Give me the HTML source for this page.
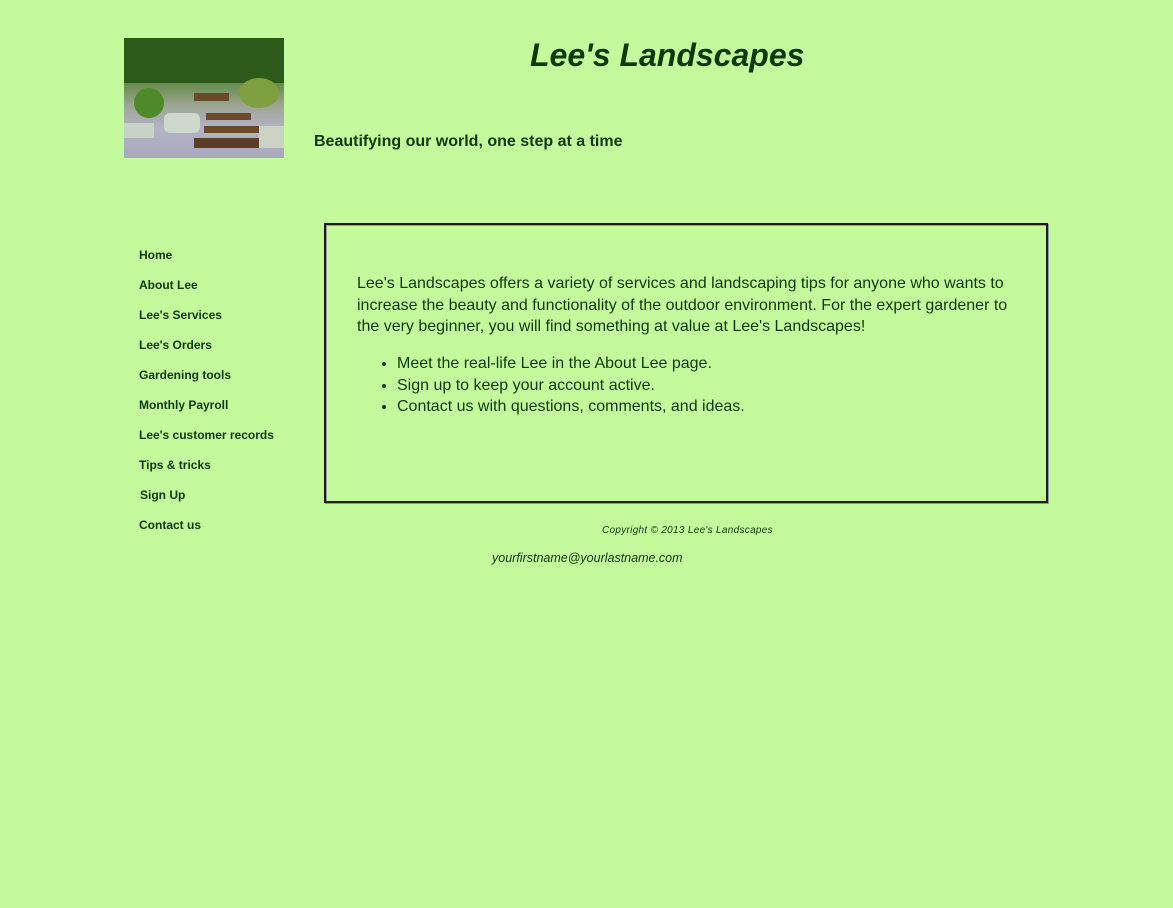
<!DOCTYPE html>
<html><head><style>
body{margin:0;background:#c3fb9c;font-family:"Liberation Sans",Arial,sans-serif;color:#0d3a0d;width:1173px;height:908px;position:relative;overflow:hidden}
.a{position:absolute}
.img{left:124px;top:38px;width:160px;height:120px;background:linear-gradient(180deg,#2f5a1c 0%,#4d7f2a 30%,#9aa48e 55%,#b4b3c6 75%,#a9a9bd 100%);overflow:hidden}
.nav div{position:absolute;left:139px;font-size:12px;font-weight:bold;color:#0d3a0d}
.box{left:324px;top:223px;width:720px;height:276px;border:2px solid #1c1c1c;box-shadow:1px 1px 0 #999, inset 1px 1px 0 #999}
</style></head><body>
<div class="a img">
<div class="a" style="left:0;top:0;width:160px;height:45px;background:#2c5a1a"></div>
<div class="a" style="left:115px;top:40px;width:40px;height:30px;background:#7fa040;border-radius:50%"></div>
<div class="a" style="left:10px;top:50px;width:30px;height:30px;background:#4f8a2a;border-radius:50%"></div>
<div class="a" style="left:70px;top:55px;width:35px;height:8px;background:#6b4a2a"></div>
<div class="a" style="left:82px;top:75px;width:45px;height:7px;background:#6b4a2a"></div>
<div class="a" style="left:80px;top:88px;width:58px;height:7px;background:#6b4a2a"></div>
<div class="a" style="left:70px;top:100px;width:70px;height:10px;background:#5e3e22"></div>
<div class="a" style="left:40px;top:75px;width:36px;height:20px;background:#cfd8cc;border-radius:6px"></div>
<div class="a" style="left:0;top:85px;width:30px;height:15px;background:#c8d2c6"></div>
<div class="a" style="left:135px;top:88px;width:25px;height:22px;background:#cbd2c6"></div>
</div>
<div class="a" style="left:530px;top:37px;font-size:32px;font-weight:bold;font-style:italic;color:#0a3a0a">Lee's Landscapes</div>
<div class="a" style="left:314px;top:133px;font-size:16px;font-weight:bold;color:#0d3a0d">Beautifying our world, one step at a time</div>
<div class="nav">
<div style="top:248px">Home</div><div style="top:278px">About Lee</div><div style="top:308px">Lee's Services</div><div style="top:338px">Lee's Orders</div><div style="top:368px">Gardening tools</div><div style="top:398px">Monthly Payroll</div><div style="top:428px">Lee's customer records</div><div style="top:458px">Tips &amp; tricks</div><div style="top:488px;left:140px">Sign Up</div><div style="top:518px">Contact us</div>
</div>
<div class="a box"></div>
<div class="a" style="left:357px;top:273px;width:670px;font-size:16px;line-height:21.5px">Lee's Landscapes offers a variety of services and landscaping tips for anyone who wants to increase the beauty and functionality of the outdoor environment. For the expert gardener to the very beginner, you will find something at value at Lee's Landscapes!</div>
<ul class="a" style="left:357px;top:353px;margin:0;padding-left:40px;font-size:16px;line-height:21.5px"><li>Meet the real-life Lee in the About Lee page.</li><li>Sign up to keep your account active.</li><li>Contact us with questions, comments, and ideas.</li></ul>
<div class="a" style="left:602px;top:525px;font-size:10px;font-style:italic;letter-spacing:0.3px">Copyright © 2013 Lee's Landscapes</div>
<div class="a" style="left:492px;top:551px;font-size:12.5px;font-style:italic">yourfirstname@yourlastname.com</div>
</body></html>
